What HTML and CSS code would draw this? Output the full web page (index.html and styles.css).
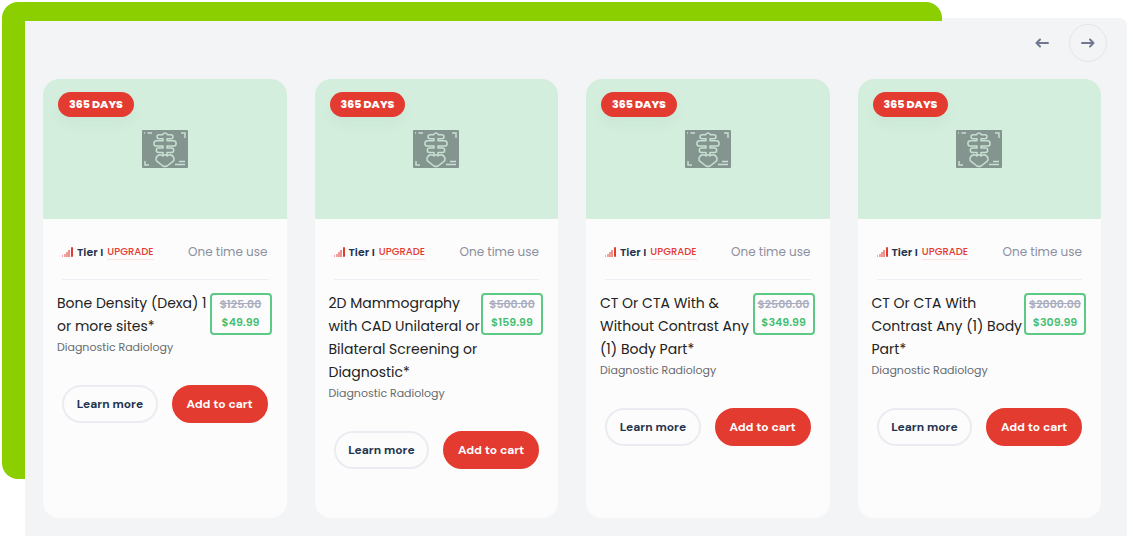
FILE: index.html
```html
<!DOCTYPE html>
<html lang="en">
  <head>
    <meta charset="UTF-8" />
    <meta name="viewport" content="width=device-width, initial-scale=1.0" />
    <title>Diagnostic Radiology</title>
    <link rel="stylesheet" href="styles.css">
  </head>
  <body>
    <!-- shared icons -->
    <svg class="sprite" aria-hidden="true">
      <symbol id="xray" viewBox="0 0 46 38">
        <rect width="46" height="38" rx="1" fill="#84958f" />
        <g fill="none" stroke="#c6e0d1" stroke-width="1.5" stroke-linejoin="round" stroke-linecap="round">
          <path d="M23 3q-1.500 0-2.500 1.800H17a2 2 0 0 0 0 4h4v2h-6.500a2.600 2.600 0 0 0 0 5.200H21v2h-4.500a2.200 2.200 0 0 0 0 4.400H21v3l-3.500-.6q-3.500 1.200-3.500 4.600 0 1 1 2l6 4.600q2 1.200 4 0l6-4.600q1-1 1-2 0-3.400-3.500-4.600l-3.500.6v-3h4.500a2.200 2.200 0 0 0 0-4.400H25v-2h6.500a2.600 2.600 0 0 0 0-5.200H25v-2h4a2 2 0 0 0 0-4h-3.500Q24.500 3 23 3z" />
          <path d="M21 26l2-1.500 2 1.500" />
        </g>
        <g fill="none" stroke="#c6e0d1" stroke-width="1.500">
          <path d="M2 3h1M5.500 3H10M39 3h4v5M3 31v4h4M37 31.500h6M33 34.500h10" />
        </g>
      </symbol>
      <symbol id="signal" viewBox="0 0 11 10">
        <g fill="#e43b30">
          <rect y="8" width="1" height="2" opacity=".45" />
          <rect x="2" y="7" width="2" height="3" opacity=".45" />
          <rect x="4" y="5" width="2" height="5" opacity=".5" />
          <rect x="6" y="3" width="2" height="7" opacity=".55" />
          <rect x="9" width="2" height="10" rx="1" />
        </g>
      </symbol>
    </svg>

    <main class="stage">
      <div class="frame"></div>
      <section class="panel">
        <div class="nav">
          <button class="nav-btn" type="button" aria-label="Previous">
            <svg width="14" height="10" viewBox="0 0 14 10"><path d="M13 5H2M5 1.500L1.500 5 5 8.500" /></svg>
          </button>
          <button class="nav-btn nav-btn-next" type="button" aria-label="Next">
            <svg width="14" height="10" viewBox="0 0 14 10"><path d="M1 5h11M9 1.500L12.500 5 9 8.500" /></svg>
          </button>
        </div>

        <div class="cards">
          <article class="card">
            <div class="card-top">
              <span class="badge">365 DAYS</span>
              <svg class="xray"><use href="#xray" /></svg>
            </div>
            <div class="tier">
              <svg class="signal"><use href="#signal" /></svg>
              <span class="tier-name">Tier I</span>
              <a class="upgrade" href="#">UPGRADE</a>
              <span class="usage">One time use</span>
            </div>
            <div class="details">
              <div class="info">
                <h2>Bone Density (Dexa) 1 or more sites*</h2>
                <p>Diagnostic Radiology</p>
              </div>
              <div class="price"><del>$125.00</del><strong>$49.99</strong></div>
            </div>
            <div class="actions">
              <button class="btn btn-more" type="button">Learn more</button>
              <button class="btn btn-cart" type="button">Add to cart</button>
            </div>
          </article>

          <article class="card">
            <div class="card-top">
              <span class="badge">365 DAYS</span>
              <svg class="xray"><use href="#xray" /></svg>
            </div>
            <div class="tier">
              <svg class="signal"><use href="#signal" /></svg>
              <span class="tier-name">Tier I</span>
              <a class="upgrade" href="#">UPGRADE</a>
              <span class="usage">One time use</span>
            </div>
            <div class="details">
              <div class="info">
                <h2>2D Mammography with CAD Unilateral or Bilateral Screening or Diagnostic*</h2>
                <p>Diagnostic Radiology</p>
              </div>
              <div class="price"><del>$500.00</del><strong>$159.99</strong></div>
            </div>
            <div class="actions">
              <button class="btn btn-more" type="button">Learn more</button>
              <button class="btn btn-cart" type="button">Add to cart</button>
            </div>
          </article>

          <article class="card">
            <div class="card-top">
              <span class="badge">365 DAYS</span>
              <svg class="xray"><use href="#xray" /></svg>
            </div>
            <div class="tier">
              <svg class="signal"><use href="#signal" /></svg>
              <span class="tier-name">Tier I</span>
              <a class="upgrade" href="#">UPGRADE</a>
              <span class="usage">One time use</span>
            </div>
            <div class="details">
              <div class="info">
                <h2>CT Or CTA With &amp; Without Contrast Any (1) Body Part*</h2>
                <p>Diagnostic Radiology</p>
              </div>
              <div class="price"><del>$2500.00</del><strong>$349.99</strong></div>
            </div>
            <div class="actions">
              <button class="btn btn-more" type="button">Learn more</button>
              <button class="btn btn-cart" type="button">Add to cart</button>
            </div>
          </article>

          <article class="card">
            <div class="card-top">
              <span class="badge">365 DAYS</span>
              <svg class="xray"><use href="#xray" /></svg>
            </div>
            <div class="tier">
              <svg class="signal"><use href="#signal" /></svg>
              <span class="tier-name">Tier I</span>
              <a class="upgrade" href="#">UPGRADE</a>
              <span class="usage">One time use</span>
            </div>
            <div class="details">
              <div class="info">
                <h2>CT Or CTA With Contrast Any (1) Body Part*</h2>
                <p>Diagnostic Radiology</p>
              </div>
              <div class="price"><del>$2000.00</del><strong>$309.99</strong></div>
            </div>
            <div class="actions">
              <button class="btn btn-more" type="button">Learn more</button>
              <button class="btn btn-cart" type="button">Add to cart</button>
            </div>
          </article>
        </div>
      </section>
    </main>
  </body>
</html>
```
FILE: styles.css
```css
* {
  margin: 0;
  padding: 0;
  box-sizing: border-box;
}

body {
  background-color: #fff;
  font-family: Poppins, Inter, sans-serif;
}

button {
  font-family: inherit;
  cursor: pointer;
}

.sprite {
  position: absolute;
  width: 0;
  height: 0;
}

/*STRUCTURE*/
.stage {
  position: relative;
  padding: 18px 6px 6px 25px;
}

/* green corner that lies over the panel edge */
.frame {
  position: absolute;
  top: 2px;
  bottom: 63px;
  left: 2px;
  width: 83%;
  border: 0 solid #8ccf00;
  border-width: 19px 0 0 23px;
  border-radius: 16px 16px 0 16px;
  pointer-events: none;
}

.panel {
  background-color: #f3f4f6;
  border-radius: 0 8px 0 0;
  padding: 6px 26px 18px 18px;
}

.nav {
  display: flex;
  justify-content: flex-end;
  gap: 8px;
  margin: 0 -6px 17px 0;
}

.cards {
  display: grid;
  grid-template-columns: repeat(4, 1fr);
  gap: 28px;
}

/*COMPONENTS*/
.nav-btn {
  display: flex;
  align-items: center;
  justify-content: center;
  width: 38px;
  height: 38px;
  background: none;
  border: 1px solid transparent;
  border-radius: 50%;
}

.nav-btn-next {
  border-color: #e3e5e9;
}

.nav-btn path {
  fill: none;
  stroke: #6f7890;
  stroke-width: 2;
  stroke-linecap: round;
  stroke-linejoin: round;
}

.card {
  background-color: #fcfcfc;
  border-radius: 16px;
  padding-bottom: 49px;
  overflow: hidden;
}

.card-top {
  position: relative;
  display: flex;
  align-items: center;
  justify-content: center;
  height: 140px;
  background-color: #d3eedd;
}

.badge {
  position: absolute;
  top: 13px;
  left: 15px;
  padding: 0 11px;
  font-size: 11px;
  font-weight: 800;
  line-height: 25px;
  color: #fff;
  background-color: #e43b30;
  border-radius: 13px;
  box-shadow: 0 8px 12px rgba(70, 110, 90, 0.05);
}

.xray {
  width: 46px;
  height: 38px;
}

.tier {
  display: flex;
  align-items: center;
  margin: 0 19px;
  padding: 24px 0 18px;
  border-bottom: 1px solid #eceef3;
  line-height: 18px;
}

.signal {
  width: 11px;
  height: 10px;
}

.tier-name {
  margin: 0 4px;
  font-size: 11px;
  font-weight: 600;
  color: #24344f;
}

.upgrade {
  border-bottom: 1px solid #fbe3e1;
  font-size: 10px;
  font-weight: 500;
  line-height: 14px;
  color: #e43b30;
  text-decoration: none;
}

.usage {
  margin-left: auto;
  font-size: 12px;
  color: #8c90a0;
}

.details {
  display: flex;
  align-items: flex-start;
  justify-content: space-between;
  padding: 12px 15px 0 14px;
}

.info {
  flex: 1;
}

.info h2 {
  font-size: 14px;
  font-weight: 400;
  line-height: 23px;
  color: #222;
}

.info p {
  font-size: 11px;
  line-height: 18px;
  color: #666a6e;
}

.price {
  display: flex;
  flex-direction: column;
  width: 62px;
  height: 42px;
  border: 2px solid #5cc985;
  border-radius: 4px;
  margin-top: 1px;
  font-size: 11px;
  font-weight: 600;
  line-height: 18px;
  text-align: center;
}

.price del {
  color: #a9adbf;
}

.price strong {
  font-weight: 600;
  color: #45bf70;
}

.actions {
  display: flex;
  gap: 14px;
  padding: 29px 19px 0;
}

.btn {
  flex: 1;
  height: 38px;
  border: 2px solid #ebecf2;
  border-radius: 19px;
  font-family: "DM Sans", Poppins, Inter, sans-serif;
  font-size: 12px;
  font-weight: 700;
  white-space: nowrap;
}

.btn-more {
  background-color: #fcfcfc;
  color: #24344f;
}

.btn-cart {
  background-color: #e43b30;
  border-color: #e43b30;
  color: #fff;
}
```
